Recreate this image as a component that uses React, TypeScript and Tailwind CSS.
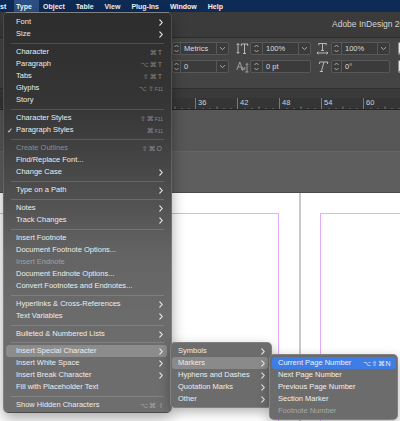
import React from 'react';

type Entry =
  | 'sep'
  | 'sepSmall'
  | {
      label: string;
      sub?: boolean;
      keys?: string;
      fkey?: string;
      disabled?: boolean;
      checked?: boolean;
      active?: boolean;
    };

const typeMenu: Entry[] = [
  { label: 'Font', sub: true },
  { label: 'Size', sub: true },
  'sep',
  { label: 'Character', keys: '⌘T' },
  { label: 'Paragraph', keys: '⌥⌘T' },
  { label: 'Tabs', keys: '⇧⌘T' },
  { label: 'Glyphs', keys: '⌥⇧', fkey: 'F11' },
  { label: 'Story' },
  'sep',
  { label: 'Character Styles', keys: '⇧⌘', fkey: 'F11' },
  { label: 'Paragraph Styles', keys: '⌘', fkey: 'F11', checked: true },
  'sep',
  { label: 'Create Outlines', keys: '⇧⌘O', disabled: true },
  { label: 'Find/Replace Font...' },
  { label: 'Change Case', sub: true },
  'sep',
  { label: 'Type on a Path', sub: true },
  'sep',
  { label: 'Notes', sub: true },
  { label: 'Track Changes', sub: true },
  'sep',
  { label: 'Insert Footnote' },
  { label: 'Document Footnote Options...' },
  { label: 'Insert Endnote', disabled: true },
  { label: 'Document Endnote Options...' },
  { label: 'Convert Footnotes and Endnotes...' },
  'sep',
  { label: 'Hyperlinks & Cross-References', sub: true },
  { label: 'Text Variables', sub: true },
  'sep',
  { label: 'Bulleted & Numbered Lists', sub: true },
  'sepSmall',
  { label: 'Insert Special Character', sub: true, active: true },
  { label: 'Insert White Space', sub: true },
  { label: 'Insert Break Character', sub: true },
  { label: 'Fill with Placeholder Text' },
  'sep',
  { label: 'Show Hidden Characters', keys: '⌥⌘ I' },
];

const specialMenu = [
  { label: 'Symbols' },
  { label: 'Markers', active: true },
  { label: 'Hyphens and Dashes' },
  { label: 'Quotation Marks' },
  { label: 'Other' },
];

const markersMenu = [
  { label: 'Current Page Number', keys: '⌥⇧⌘N', active: true },
  { label: 'Next Page Number' },
  { label: 'Previous Page Number' },
  { label: 'Section Marker' },
  { label: 'Footnote Number', disabled: true },
];

// ruler cells start at x = -15, 42px apart; the first five sit under the menu
const rulerMarks = ['', '', '', '', '', '36', '42', '48', '54', '60'];

function Chevron() {
  return (
    <svg width="4" height="7" viewBox="0 0 4 7" className="shrink-0">
      <path d="M0.8 0.8 L3.2 3.5 L0.8 6.2" stroke="#ececec" strokeWidth="1.1" fill="none" strokeLinecap="round" />
    </svg>
  );
}

function Spinner({ w }: { w: number }) {
  return (
    <div className="flex h-full items-center justify-center border-r border-[#585858]" style={{ width: w }}>
      <svg width="7" height="11" viewBox="0 0 7 11">
        <path d="M1.5 4 L3.5 2 L5.5 4 M1.5 7 L3.5 9 L5.5 7" stroke="#b5b5b5" strokeWidth="0.9" fill="none" />
      </svg>
    </div>
  );
}

function Dropdown() {
  return (
    <div className="flex h-full w-[12px] items-center justify-center border-l border-[#585858]">
      <svg width="7" height="5" viewBox="0 0 7 5">
        <path d="M1 1.2 L3.5 3.6 L6 1.2" stroke="#b5b5b5" strokeWidth="0.9" fill="none" />
      </svg>
    </div>
  );
}

function Field({ spin, text, width, drop }: { spin: number; text: string; width: number; drop?: boolean }) {
  return (
    <div className="flex h-[13px] items-stretch rounded-[2px] border border-[#585858] bg-[#3b3b3b]">
      <Spinner w={spin} />
      <div className="flex items-center pl-[3px] text-[7.5px] text-[#dcdcdc]" style={{ width }}>
        {text}
      </div>
      {drop && <Dropdown />}
    </div>
  );
}

function Swatch() {
  return (
    <svg width="14" height="13" viewBox="0 0 14 13" className="shrink-0">
      <rect x="0.5" y="0.5" width="13" height="12" rx="1" fill="#e9e9e9" stroke="#8d8d8d" />
      <rect x="2" y="2" width="10" height="3" fill="#d2d2d2" />
      <path d="M1.5 12 L12.5 1.5" stroke="#e2231a" strokeWidth="1.3" />
    </svg>
  );
}

function ScaleVIcon() {
  return (
    <svg width="13" height="13" viewBox="0 0 13 13" className="shrink-0">
      <g stroke="#b8b8b8" fill="none" strokeWidth="1">
        <path d="M2 1.5 V11.5 M0.7 3 L2 1.5 L3.3 3 M0.7 10 L2 11.5 L3.3 10" />
        <path d="M5 2 H12 M5.3 2 V4 M11.7 2 V4 M8.5 2 V11.5 M7 11.5 H10" />
      </g>
    </svg>
  );
}

function ScaleHIcon() {
  return (
    <svg width="13" height="13" viewBox="0 0 13 13" className="shrink-0">
      <g stroke="#b8b8b8" fill="none" strokeWidth="1">
        <path d="M2.5 1.5 H10.5 M2.8 1.5 V3.3 M10.2 1.5 V3.3 M6.5 1.5 V8.5 M5 8.5 H8" />
        <path d="M1 11 H12 M2.4 9.7 L1 11 L2.4 12.3 M10.6 9.7 L12 11 L10.6 12.3" />
      </g>
    </svg>
  );
}

function BaselineIcon() {
  return (
    <svg width="13" height="13" viewBox="0 0 13 13" className="shrink-0">
      <g stroke="#a8a8a8" fill="none" strokeWidth="0.9">
        <path d="M0.8 10 L3.8 2 L6.8 10 M2 7 H5.6" />
        <path d="M7.5 8 A1.3 1.3 0 1 0 7.6 8.1 M8.8 7 V9.6" />
        <path d="M11 12 V3.5 M9.8 4.8 L11 3.5 L12.2 4.8 M9 12 H12.5" />
      </g>
    </svg>
  );
}

function SkewIcon() {
  return (
    <svg width="13" height="13" viewBox="0 0 13 13" className="shrink-0">
      <g stroke="#b8b8b8" fill="none" strokeWidth="1">
        <path d="M3.5 2 H12 M3.8 2 L3.2 4 M11.8 2 L11.4 4 M8 2 L5.3 11.5 M3.8 11.5 H7" />
      </g>
    </svg>
  );
}

function Ruler() {
  return (
    <div className="flex h-[12px] shrink-0 -ml-[15px] border-b border-[#262626] bg-[#353535]">
      {rulerMarks.map((n, i) => (
        <div key={i} className="relative h-full w-[42px] shrink-0 border-l border-[#7a7a7a] pl-[2px] text-[7.5px] leading-[9px] text-[#d2d2d2]">
          {n}
          <svg width="42" height="3" viewBox="0 0 42 3" className="absolute bottom-0 left-0">
            <path d="M7 2 V3 M14 2 V3 M21 0.5 V3 M28 2 V3 M35 2 V3" stroke="#8a8a8a" strokeWidth="0.8" />
          </svg>
        </div>
      ))}
    </div>
  );
}

function MainMenu() {
  return (
    <div className="absolute left-[3px] top-[12px] w-[169px] rounded-[5px] border border-white/15 bg-[linear-gradient(180deg,#2d2d2d_0%,#353535_22%,#3f3f3f_32%,#4e4e4e_45%,#636363_60%,#6b6b6b_75%,#6e6e6e_100%)] pt-[3px] pb-[1px] shadow-[0_5px_14px_rgba(0,0,0,0.35)]">
      {typeMenu.map((e, i) => {
        if (e === 'sep' || e === 'sepSmall') {
          return (
            <div key={i} className={e === 'sep' ? 'flex h-[6px] items-center px-[7px]' : 'flex h-[5px] items-center px-[7px]'}>
              <div className="h-px w-full bg-white/15" />
            </div>
          );
        }
        return (
          <div
            key={i}
            className={
              e.active
                ? 'ml-[2px] mr-[4px] flex h-[12px] items-center rounded-[3px] bg-[#8c8c8c] pr-[4px]'
                : 'ml-[2px] mr-[4px] flex h-[12px] items-center rounded-[3px] pr-[4px]'
            }
          >
            <div className="w-[10px] pl-[1px] text-[7px] leading-none text-[#eaeaea]">{e.checked ? '✓' : ''}</div>
            <div className={e.disabled ? 'flex-1 text-[7.5px] leading-none text-white/40' : 'flex-1 text-[7.5px] leading-none text-[#ececec]'}>
              {e.label}
            </div>
            {e.sub && <Chevron />}
            {e.keys && (
              <div className="flex items-baseline text-[7px] leading-none tracking-[1px] text-white/40">
                {e.keys}
                {e.fkey && <span className="text-[5px] tracking-normal">{e.fkey}</span>}
              </div>
            )}
          </div>
        );
      })}
    </div>
  );
}

function SpecialMenu() {
  return (
    <div className="absolute left-[170px] top-[342px] w-[102px] rounded-[5px] border border-white/15 bg-[#6c6c6c] pt-[2px] pb-[2px] shadow-[0_4px_12px_rgba(0,0,0,0.3)]">
      {specialMenu.map((e) => (
        <div
          key={e.label}
          className={
            e.active
              ? 'ml-[1px] mr-[3px] flex h-[12px] items-center rounded-[3px] bg-[#8a8a8a] pl-[6px] pr-[3px]'
              : 'ml-[1px] mr-[3px] flex h-[12px] items-center rounded-[3px] pl-[6px] pr-[3px]'
          }
        >
          <div className="flex-1 text-[7.5px] leading-none text-[#ececec]">{e.label}</div>
          <Chevron />
        </div>
      ))}
    </div>
  );
}

function MarkersMenu() {
  return (
    <div className="absolute left-[269px] top-[354px] w-[129px] rounded-[5px] border border-white/15 bg-[#6c6c6c] pt-[2px] pb-[2px] shadow-[0_4px_12px_rgba(0,0,0,0.3)]">
      {markersMenu.map((e) => (
        <div
          key={e.label}
          className={
            e.active
              ? 'ml-[2px] mr-[1px] flex h-[12px] items-center rounded-[3px] bg-[#3f7de6] pl-[6px] pr-[5px]'
              : 'ml-[2px] mr-[1px] flex h-[12px] items-center rounded-[3px] pl-[6px] pr-[5px]'
          }
        >
          <div className={e.disabled ? 'flex-1 text-[7.5px] leading-none text-white/40' : 'flex-1 text-[7.5px] leading-none text-[#f0f0f0]'}>
            {e.label}
          </div>
          {e.keys && <div className="text-[7px] leading-none tracking-[0.5px] text-[#f0f0f0]">{e.keys}</div>}
        </div>
      ))}
    </div>
  );
}

export default function App() {
  return (
    <div className="relative flex h-[421px] w-[400px] flex-col overflow-hidden bg-white font-['Liberation_Sans','DejaVu_Sans',sans-serif]">
      {/* menu bar */}
      <div className="flex h-[12px] shrink-0 items-center bg-[#0e2b56] text-[7px] font-bold leading-none text-[#f2f2f2]">
        <span className="w-[14px] shrink-0">st</span>
        <span className="flex h-full w-[25px] shrink-0 items-center bg-[#2b4f82] pl-[2px]">Type</span>
        <div className="ml-[4px] flex gap-[11px] whitespace-nowrap">
          <span>Object</span>
          <span>Table</span>
          <span>View</span>
          <span>Plug-Ins</span>
          <span>Window</span>
          <span>Help</span>
        </div>
      </div>

      {/* title bar */}
      <div className="flex h-[26px] shrink-0 items-center border-b border-[#2c2c2c] bg-[#3b3b3b] pl-[332px] whitespace-nowrap text-[8.5px] text-[#d4d4d4]">
        Adobe InDesign 2023
      </div>

      {/* control panel */}
      <div className="flex h-[50px] shrink-0 flex-col gap-[5px] bg-[#444444] pt-[4px] whitespace-nowrap">
        <div className="flex h-[13px] items-center pl-[172px]">
          <Field spin={8} text="Metrics" width={35} drop />
          <div className="ml-[7px]"><ScaleVIcon /></div>
          <div className="ml-[1px]"><Field spin={12} text="100%" width={35} drop /></div>
          <div className="ml-[5px]"><ScaleHIcon /></div>
          <div className="ml-[2px]"><Field spin={10} text="100%" width={35} drop /></div>
          <div className="ml-[8px]"><Swatch /></div>
        </div>
        <div className="flex h-[13px] items-center pl-[172px]">
          <Field spin={8} text="0" width={35} drop />
          <div className="ml-[7px]"><BaselineIcon /></div>
          <div className="ml-[1px]"><Field spin={12} text="0 pt" width={47} /></div>
          <div className="ml-[5px]"><SkewIcon /></div>
          <div className="ml-[2px]"><Field spin={10} text="0°" width={47} /></div>
          <div className="ml-[8px]"><Swatch /></div>
        </div>
      </div>

      <div className="h-[10px] shrink-0 border-t border-[#2f2f2f] bg-[#3a3a3a]" />
      <Ruler />

      {/* pasteboard */}
      <div className="h-[41px] shrink-0 bg-[#575757]" />
      <div className="h-[41px] shrink-0 border-t border-[#646464] bg-[#5e5e5e]" />

      {/* pages */}
      <div className="flex flex-1 border-t border-[#4a4a4a] bg-white">
        <div className="w-[299px] shrink-0 pt-[20px]">
          <div className="h-full w-[279px] border-t border-r border-[#e4acfb]" />
        </div>
        <div className="w-[2px] shrink-0 bg-[#c9c9c9]" />
        <div className="flex-1 pt-[20px] pl-[19px]">
          <div className="h-full border-t border-l border-[#e4acfb]" />
        </div>
      </div>

      <MainMenu />
      <SpecialMenu />
      <MarkersMenu />
    </div>
  );
}
